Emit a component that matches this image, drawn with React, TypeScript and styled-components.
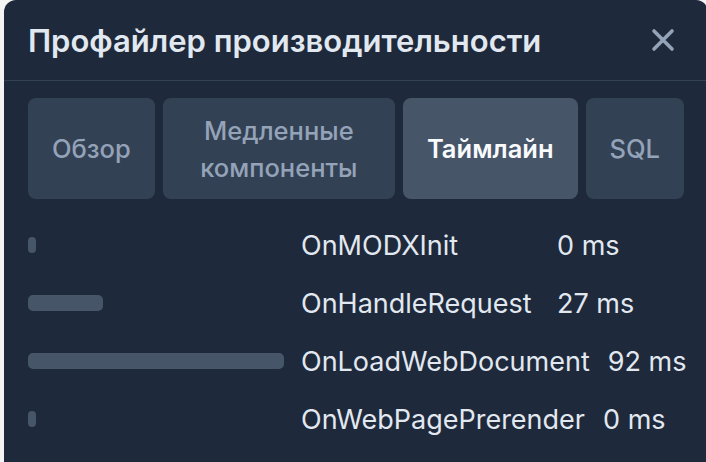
import React from "react";
import styled, { createGlobalStyle } from "styled-components";

const GlobalStyle = createGlobalStyle`
  html, body {
    margin: 0;
    padding: 0;
    background: #f4f4f5;
    overflow: hidden;
  }
  body {
    font-family: Inter, "Noto Sans", sans-serif;
  }
`;

const Panel = styled.div`
  margin-left: 4px;
  width: 704px;
  height: 470px;
  background: #1e293b;
  border-radius: 12px 12px 0 0;
  display: flex;
  flex-direction: column;
  box-sizing: border-box;
`;

const Header = styled.div`
  height: 80px;
  padding: 0 31px 0 24px;
  display: flex;
  align-items: center;
  justify-content: space-between;
  border-bottom: 1px solid #334155;
`;

const Title = styled.h2`
  margin: 0;
  font-size: 31px;
  font-weight: 600;
  color: #e2e8f0;
  letter-spacing: 0;
`;

const CloseButton = styled.button`
  border: 0;
  background: transparent;
  padding: 0;
  width: 28px;
  height: 28px;
  display: flex;
  align-items: center;
  justify-content: center;
  color: #94a3b8;
  cursor: pointer;
`;

const Tabs = styled.div`
  display: flex;
  gap: 8px;
  padding: 17px 24px 0;
`;

const Tab = styled.button<{ $active?: boolean }>`
  border: 0;
  border-radius: 8px;
  padding: 12px 24px;
  min-height: 101px;
  display: flex;
  align-items: center;
  justify-content: center;
  text-align: center;
  font-family: inherit;
  font-size: 25.5px;
  line-height: 37px;
  font-weight: ${(p) => (p.$active ? 600 : 500)};
  color: ${(p) => (p.$active ? "#f8fafc" : "#94a3b8")};
  background: ${(p) => (p.$active ? "#475569" : "#334155")};
`;

const List = styled.div`
  display: flex;
  flex-direction: column;
  padding: 17px 24px 0;
`;

const Row = styled.div`
  height: 58px;
  display: flex;
  align-items: center;
  gap: 17px;
  font-size: 27px;
  color: #e2e8f0;
  white-space: nowrap;
`;

const Track = styled.div`
  width: 256px;
  flex: none;
  display: flex;
`;

const Bar = styled.div`
  height: 16px;
  min-width: 8px;
  border-radius: 5px;
  background: #475569;
`;

const Label = styled.span`
  flex: none;
  min-width: 238px;
`;

const Time = styled.span`
  flex: none;
  margin-left: 1px;
`;

const events = [
  { name: "OnMODXInit", ms: 0 },
  { name: "OnHandleRequest", ms: 27 },
  { name: "OnLoadWebDocument", ms: 92 },
  { name: "OnWebPagePrerender", ms: 0 },
];

const max = 92;

export default function App() {
  return (
    <>
      <GlobalStyle />
      <Panel>
        <Header>
          <Title>Профайлер производительности</Title>
          <CloseButton aria-label="Закрыть">
            <svg width="26" height="26" viewBox="0 0 26 26" fill="none">
              <path
                d="M4 4 L22 22 M22 4 L4 22"
                stroke="currentColor"
                strokeWidth="3.6"
                strokeLinecap="round"
              />
            </svg>
          </CloseButton>
        </Header>
        <Tabs>
          <Tab>Обзор</Tab>
          <Tab>Медленные компоненты</Tab>
          <Tab $active>Таймлайн</Tab>
          <Tab>SQL</Tab>
        </Tabs>
        <List>
          {events.map((e) => (
            <Row key={e.name}>
              <Track>
                <Bar style={{ width: `${(e.ms / max) * 100}%` }} />
              </Track>
              <Label>{e.name}</Label>
              <Time>{e.ms} ms</Time>
            </Row>
          ))}
        </List>
      </Panel>
    </>
  );
}
